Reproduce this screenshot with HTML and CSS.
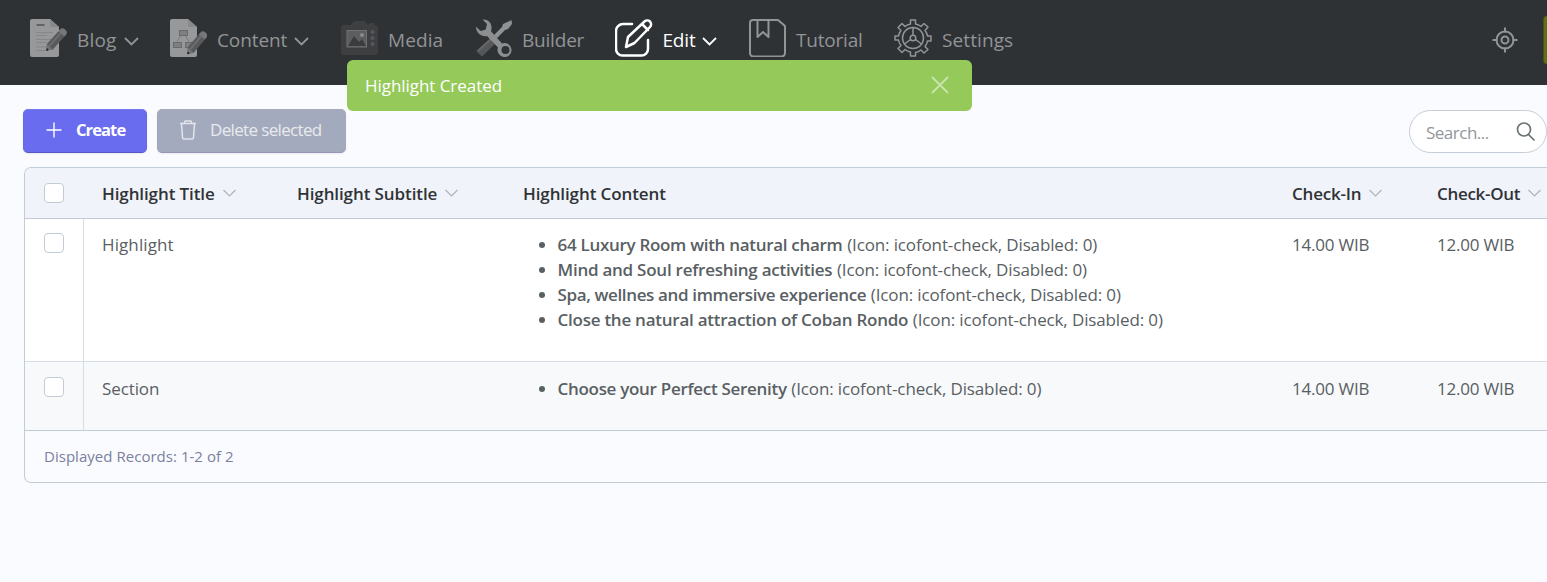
FILE: index.html
```html
<!DOCTYPE html>
<html lang="en">
<head>
<meta charset="utf-8">
<title>Highlights</title>
<link rel="stylesheet" href="styles.css">
</head>
<body>
<header class="topbar">
  <nav class="menu">
    <a class="item">
      <svg class="icon" viewBox="0 0 38 38"><path d="M3 0h18l9 8v28a2 2 0 0 1-2 2H3a2 2 0 0 1-2-2V2a2 2 0 0 1 2-2z" fill="#96989a"/><path d="M21 0v6a2 2 0 0 0 2 2h7z" fill="#88898b"/><path d="M7.500 6h8" stroke="#626466" stroke-width="2"/><path d="M7 13.500h17M7 16.500h11M7 20.500h17M7 23.500h11M7 28h15M7 31.500h12" stroke="#858789" stroke-width="1"/><g transform="translate(17.500 31.500) rotate(-48)"><path d="M0 0l5-4h17v8H5z" fill="#58595b"/><path d="M5-1h17" stroke="#6c6d6f" stroke-width="2"/><path d="M22-4h2.500a3.500 3.500 0 0 1 3.500 3.500v1A3.500 3.500 0 0 1 24.500 4H22z" fill="#76777a"/><path d="M0 0l5-4v8z" fill="#737476"/><circle cx="1.200" r="1.200" fill="#2f3133"/></g></svg>
      <span class="label blog">Blog</span><svg class="caret" viewBox="0 0 15 9"><path d="M1 1l6.500 6.500L14 1"/></svg>
    </a>
    <a class="item">
      <svg class="icon" viewBox="0 0 38 38"><path d="M3 0h16l9 8v28a2 2 0 0 1-2 2H3a2 2 0 0 1-2-2V2a2 2 0 0 1 2-2z" fill="#96989a"/><path d="M19 0v6a2 2 0 0 0 2 2h7z" fill="#88898b"/><g fill="#7d7f81" stroke="#686a6c"><path d="M12 16l-4 7M16 16l4 7" fill="none" stroke="#7b7d7f"/><rect x="10.500" y="11.500" width="8" height="5"/><rect x="4.500" y="23.500" width="8" height="5"/><rect x="16.500" y="23.500" width="8" height="5"/></g><g transform="translate(18.500 35) rotate(-50)"><path d="M0 0l5-4h17v8H5z" fill="#58595b"/><path d="M5-1h17" stroke="#6c6d6f" stroke-width="2"/><path d="M22-4h2.500a3.500 3.500 0 0 1 3.500 3.500v1A3.500 3.500 0 0 1 24.500 4H22z" fill="#76777a"/><path d="M0 0l5-4v8z" fill="#737476"/><circle cx="1.200" r="1.200" fill="#2f3133"/></g></svg>
      <span class="label content">Content</span><svg class="caret" viewBox="0 0 15 9"><path d="M1 1l6.500 6.500L14 1"/></svg>
    </a>
    <a class="item">
      <svg class="icon" viewBox="0 0 38 38"><path d="M4 6h7l3-4h11l3 4h7a3 3 0 0 1 3 3v24a3 3 0 0 1-3 3H4a3 3 0 0 1-3-3V9a3 3 0 0 1 3-3zM29 4h5v2h-5z" fill="#3d3f41"/><rect x="7" y="11.500" width="19.500" height="16.500" fill="#5c5e60" stroke="#6e7072"/><path d="M8 27l6-10 5 6 3-3 4 7z" fill="#3a3c3e"/><circle cx="22" cy="16" r="2" fill="#8b8c8e"/><g fill="#55575a"><circle cx="32.500" cy="13" r="2"/><circle cx="32.500" cy="19" r="2"/><circle cx="32.500" cy="25" r="2"/></g></svg>
      <span class="label media">Media</span>
    </a>
    <a class="item">
      <svg class="icon" viewBox="0 0 38 38"><path d="M18 18l4 5L7 37.500 1 32z" fill="#555759"/><path d="M3.500 31.500l14-13" stroke="#656769" stroke-width="2"/><path d="M36.500 1l.5 4-4 5-3 1-9 9-3-3 9-9 1-3z" fill="#909294"/><path d="M7.500.5C13 0 17 4 16.500 9l-.3 3.500L27 24.500a7 7 0 1 1-4 4L12 17C7 18 1.500 15 .7 7.500l5 4.500 5-1.500L12 5z" fill="#8c8e90"/><circle cx="30.500" cy="31" r="4" fill="#2e3235"/></svg>
      <span class="label builder">Builder</span>
    </a>
    <a class="item active">
      <svg class="icon line bold" viewBox="0 0 38 38"><path d="M17 5H8a7 7 0 0 0-7 7v18a6.500 6.500 0 0 0 6.500 6.500h19A6.500 6.500 0 0 0 33 30v-9"/><path d="M11 28l2-10L29.500 2.500a4 4 0 0 1 5.500 0 4 4 0 0 1 0 5.500L19.500 24zM27 5l6 6"/></svg>
      <span class="label edit">Edit</span><svg class="caret" viewBox="0 0 15 9"><path d="M1 1l6.500 6.500L14 1"/></svg>
    </a>
    <a class="item">
      <svg class="icon line" viewBox="0 0 38 38"><path d="M4 1h25l7 6v27a3.500 3.500 0 0 1-3.500 3.500h-28A3.500 3.500 0 0 1 1 34V4a3 3 0 0 1 3-3zM8.500 1v17l5.500-5 5.500 5V1"/></svg>
      <span class="label tutorial">Tutorial</span>
    </a>
    <a class="item">
      <svg class="icon line thin" viewBox="0 0 38 38"><path d="M16.500 5V1h5v4q3 .5 5.500 2.500l3-3L34 8l-3 3.500q2 2.500 2.500 5.500H37v5h-3.500q-.5 3-2.500 5.500l3 3-4 3.500-3-3q-2.500 2-5.500 2.500V37h-5v-4q-3-.5-5.500-2.500l-3 3-4-4 3-3q-2-2.500-2.500-5.500H1v-4h3.500Q5 14 7 11.500L4 8.500l4-4 3 3Q13.500 5.500 16.500 5z"/><circle cx="19" cy="19" r="10.500"/><circle cx="19" cy="19" r="2.800"/><path d="M19 8.500v7.500M10.500 25l6-4.500M27.500 25l-6-4.500"/></svg>
      <span class="label settings">Settings</span>
    </a>
  </nav>
  <svg class="target" viewBox="0 0 26 26"><circle cx="13" cy="13" r="8.500"/><circle cx="13" cy="13" r="3.500"/><path d="M13 .5v5M13 20.500v5M.5 13h5M20.500 13h5"/></svg>
  <span class="avatar"></span>
</header>
<div class="toast"><span class="toast-text">Highlight Created</span><svg class="close" viewBox="0 0 18 18"><path d="M1 1l16 16M17 1L1 17"/></svg></div>
<main>
  <div class="tools">
    <button class="btn create"><svg class="plus" viewBox="0 0 16 16"><path d="M8 .5v15M.5 8h15"/></svg><span>Create</span></button>
    <button class="btn delete"><svg class="trash" viewBox="0 0 18 20"><path d="M1 3.500h16M5.500 3V2q0-1 1-1h5q1 0 1 1v1M2.500 3.500l1 14q0 1.500 1.500 1.500h8q1.500 0 1.500-1.500l1-14"/></svg><span>Delete selected</span></button>
    <div class="search"><span>Search...</span><svg class="lens" viewBox="0 0 20 20"><circle cx="8" cy="7.500" r="6.500"/><path d="M12.500 12.500l6 6"/></svg></div>
  </div>
  <section class="panel">
    <div class="row head">
      <div class="check"><i class="box"></i></div>
      <div class="cell"><span class="wide">Highlight Title</span><svg class="sort" viewBox="0 0 13 8"><path d="M.5 1l6 6 6-6"/></svg></div>
      <div class="cell"><span class="wide">Highlight Subtitle</span><svg class="sort" viewBox="0 0 13 8"><path d="M.5 1l6 6 6-6"/></svg></div>
      <div class="cell"><span class="wide">Highlight Content</span></div>
      <div class="cell"><span class="date">Check-In</span><svg class="sort" viewBox="0 0 13 8"><path d="M.5 1l6 6 6-6"/></svg></div>
      <div class="cell"><span>Check-Out</span><svg class="sort" viewBox="0 0 13 8"><path d="M.5 1l6 6 6-6"/></svg></div>
    </div>
    <div class="row first">
      <div class="check"><i class="box"></i></div>
      <div class="cell title">Highlight</div>
      <div class="cell"></div>
      <div class="cell"><ul>
        <li><b>64 Luxury Room with natural charm</b> <span class="meta">(Icon: icofont-check, Disabled: 0)</span></li>
        <li><b class="loose">Mind and Soul refreshing activities</b> <span class="meta">(Icon: icofont-check, Disabled: 0)</span></li>
        <li><b class="tight">Spa, wellnes and immersive experience</b> <span class="meta">(Icon: icofont-check, Disabled: 0)</span></li>
        <li><b class="loose">Close the natural attraction of Coban Rondo</b> <span class="meta">(Icon: icofont-check, Disabled: 0)</span></li>
      </ul></div>
      <div class="cell time">14.00 WIB</div>
      <div class="cell time">12.00 WIB</div>
    </div>
    <div class="row second">
      <div class="check"><i class="box"></i></div>
      <div class="cell section">Section</div>
      <div class="cell"></div>
      <div class="cell"><ul>
        <li><b>Choose your Perfect Serenity</b> <span class="meta">(Icon: icofont-check, Disabled: 0)</span></li>
      </ul></div>
      <div class="cell time">14.00 WIB</div>
      <div class="cell time">12.00 WIB</div>
    </div>
    <div class="foot"><span>Displayed Records: 1-2 of 2</span></div>
  </section>
</main>
</body>
</html>
```
FILE: styles.css
```css
* { box-sizing: border-box; }
body { margin: 0; height: 582px; overflow: hidden; background: #fafbfe; color: #596063; font: 17px/25px "Open Sans", "Noto Sans", sans-serif; letter-spacing: -0.3px; }
svg { fill: none; flex: none; display: block; }
.topbar { height: 85px; background: #2e3235; display: flex; overflow: hidden; }
.menu { display: grid; grid-template-columns: 140px 171px 135px 140px 134px 145px 160px; padding: 19px 0 0 29px; }
.item { display: flex; height: 40px; color: #929496; font-size: 19px; letter-spacing: -0.2px; }
.icon { width: 38px; height: 38px; margin-right: 10px; }
.line { stroke: #929496; stroke-width: 2; stroke-linejoin: round; stroke-linecap: round; }
.line.bold { stroke: #fff; stroke-width: 2.5; }
.line.thin { stroke-width: 1.5; }
.label { line-height: 42px; white-space: nowrap; }
.blog { letter-spacing: 0.2px; }
.content { letter-spacing: -0.1px; }
.media { letter-spacing: 0.1px; }
.builder, .tutorial { margin-left: -1px; }
.edit { margin-left: -0.5px; }
.settings { letter-spacing: 0.1px; }
.active { color: #fff; }
.caret { width: 15px; height: 9px; margin: 18px 0 0 7px; stroke: currentColor; stroke-width: 1.8; }
.target { width: 26px; height: 26px; margin: 26.500px 25px 0 auto; stroke: #929496; stroke-width: 2; }
.avatar { width: 4px; height: 48px; margin-top: 16px; background: #5d6f17; border-left: 1px solid #465313; border-radius: 6px 0 0 6px; }
.toast { position: absolute; left: 347px; top: 60px; width: 625px; height: 51px; border-radius: 6px; background: #95ca5a; color: #fff; display: flex; align-items: center; justify-content: space-between; padding: 0 23px 1px 18px; letter-spacing: -0.05px; }
.close { width: 18px; height: 18px; stroke: #cae5ad; stroke-width: 1.8; }
.tools { display: flex; align-items: flex-start; padding: 24px 0 0 23px; height: 82px; }
.btn { height: 44px; border: 1px solid; border-radius: 5px; color: #fff; display: flex; align-items: center; padding: 0 0 3px; font: inherit; box-shadow: 0 1px 2px #0001; white-space: nowrap; }
.create { width: 124px; background: #696cee; border-color: #7577eb #6669e5 #5558c2; padding-left: 22px; font-size: 16.500px; font-weight: 700; letter-spacing: -0.9px; }
.plus { width: 16px; height: 16px; margin-right: 14px; stroke: #fff; stroke-width: 1.4; }
.delete { width: 189px; margin-left: 10px; background: #a4aabd; border-color: #a6abc0 #a4a8bd #9396b4; color: #e8eaee; padding-left: 21px; letter-spacing: -0.65px; }
.trash { width: 18px; height: 20px; margin-right: 13px; stroke: #e2e4e9; stroke-width: 1.5; }
.search { width: 138px; height: 43px; margin: 1px 0 0 auto; border: 1px solid #c5ced8; border-radius: 22px; background: #fff; display: flex; align-items: center; justify-content: space-between; padding: 1px 10px 0 16px; color: #92979b; letter-spacing: -0.5px; }
.lens { width: 20px; height: 20px; stroke: #6a7473; stroke-width: 1.7; }
.panel { margin-left: 24px; height: 316px; border: 1px solid #c2ccd6; border-right: 0; border-radius: 7px 0 0 7px; overflow: hidden; }
.row { display: grid; grid-template-columns: 59px 195px 226px 769px 145px 1fr; }
.cell { padding: 13px 0 0 18px; white-space: nowrap; }
.check { padding: 14px 0 0 19px; border-right: 1px solid #d5dee6; }
.box { display: block; width: 20px; height: 20px; border: 1px solid #c2ccd6; border-radius: 4px; background: #fff; }
.head { height: 51px; background: #f0f3f9; border-bottom: 1px solid #c2ccd6; color: #303336; font-weight: 600; }
.head .cell { display: flex; }
.head .check { padding-top: 15px; border: 0; }
.wide { letter-spacing: -0.1px; }
.date { letter-spacing: -0.2px; }
.sort { width: 13px; height: 8px; margin: 8px 0 0 8px; stroke: #afb5ba; stroke-width: 1.2; }
.title { letter-spacing: 0.1px; }
.section { letter-spacing: -0.1px; }
.time { letter-spacing: -0.2px; }
.first { height: 143px; background: #fff; border-bottom: 1px solid #d5dee6; }
.second { height: 69px; background: #f8f9fb; border-bottom: 1px solid #c2ccd6; }
.second .cell { padding-top: 14px; }
.second .check { padding-top: 15px; }
ul { margin: 0; padding: 0 0 0 34.500px; }
b { font-weight: 600; letter-spacing: -0.3px; }
.loose { letter-spacing: -0.25px; }
.tight { letter-spacing: -0.36px; }
.meta { letter-spacing: -0.13px; margin-left: 0.5px; }
.foot { padding: 13px 19px; font-size: 15px; color: #7a809f; letter-spacing: 0.03px; }
```
